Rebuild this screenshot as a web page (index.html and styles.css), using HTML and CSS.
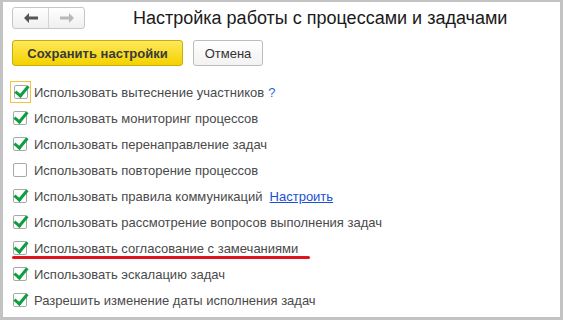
FILE: index.html
```html
<!DOCTYPE html>
<html lang="ru">
<head>
<meta charset="utf-8">
<title>Настройка работы с процессами и задачами</title>
<link rel="stylesheet" href="styles.css">
</head>
<body>
<div class="frame">
  <div class="header">
    <div class="nav">
      <span class="nav-btn back"><svg width="16" height="12" viewBox="0 0 16 12"><path d="M1 6 L6 1 L6 4.5 L15 4.5 L15 7.5 L6 7.5 L6 11 Z" fill="#555"/></svg></span>
      <span class="nav-btn fwd"><svg width="16" height="12" viewBox="0 0 16 12"><path d="M15 6 L10 1 L10 4.5 L1 4.5 L1 7.5 L10 7.5 L10 11 Z" fill="#b8b8b8"/></svg></span>
    </div>
    <h1 class="title">Настройка работы с процессами и задачами</h1>
  </div>
  <div class="actions">
    <button class="btn btn-primary">Сохранить настройки</button>
    <button class="btn btn-default">Отмена</button>
  </div>
  <ul class="options">
    <li class="opt"><span class="focus"><span class="cb checked"></span></span><span class="label">Использовать вытеснение участников</span><span class="help">?</span></li>
    <li class="opt"><span class="cb checked"></span><span class="label">Использовать мониторинг процессов</span></li>
    <li class="opt"><span class="cb checked"></span><span class="label">Использовать перенаправление задач</span></li>
    <li class="opt"><span class="cb"></span><span class="label">Использовать повторение процессов</span></li>
    <li class="opt"><span class="cb checked"></span><span class="label">Использовать правила коммуникаций</span><a class="link">Настроить</a></li>
    <li class="opt"><span class="cb checked"></span><span class="label">Использовать рассмотрение вопросов выполнения задач</span></li>
    <li class="opt"><span class="cb checked"></span><span class="label">Использовать согласование с замечаниями</span></li>
    <li class="opt"><span class="cb checked"></span><span class="label">Использовать эскалацию задач</span></li>
    <li class="opt"><span class="cb checked"></span><span class="label">Разрешить изменение даты исполнения задач</span></li>
  </ul>
  <div class="mark"></div>
</div>
</body>
</html>
```
FILE: styles.css
```css
html, body { margin: 0; padding: 0; background: #fff; }
body { font-family: "Liberation Sans", Arial, sans-serif; }
.frame {
  position: relative;
  width: 563px; height: 320px;
  box-sizing: border-box;
  border-style: solid;
  border-color: #c3c3c3;
  border-width: 2px 3px 3px 3px;
  padding: 5px 0 0 9px;
  overflow: hidden;
}
.header { display: flex; align-items: center; height: 22px; }
.nav {
  display: flex; height: 22px; box-sizing: border-box;
  border: 1px solid #c6c6c6; border-radius: 3px;
  background: linear-gradient(#ffffff, #efefef);
}
.nav-btn { width: 35px; display: flex; align-items: center; justify-content: center; }
.nav-btn.back { border-right: 1px solid #d4d4d4; }
.title {
  margin: 0 0 0 48px;
  font-size: 18px; font-weight: normal; color: #1a1a1a;
  line-height: 22px; position: relative; top: 0;
}
.actions { display: flex; gap: 10px; margin-top: 11px; }
.btn {
  height: 26px; box-sizing: border-box; border-radius: 3px;
  font-family: "Liberation Sans", Arial, sans-serif; font-size: 13px;
  padding: 0 9px; color: #333; cursor: pointer;
}
.btn-primary {
  width: 171px;
  font-weight: bold; color: #3a3a3a;
  background: linear-gradient(#fde95a, #f4d200);
  border: 1px solid #c9ac0e;
}
.btn-default {
  width: 70px;
  background: linear-gradient(#ffffff, #f2f2f2);
  border: 1px solid #bcbcbc;
}
.options { list-style: none; margin: 13px 0 0 0; padding: 0 0 0 1px; }
.opt {
  display: flex; align-items: center; height: 26px;
  font-size: 13px; color: #4a4a4a;
}
.cb {
  position: relative; flex: none;
  width: 14px; height: 14px; box-sizing: border-box;
  margin: 0 7px 0 0;
  border: 1px solid #a8a8a8; border-radius: 2px; background: #fff;
}
.cb.checked::after {
  content: ""; position: absolute;
  left: 3px; top: -3px;
  width: 5px; height: 11px;
  border-right: 3px solid #0f9d42;
  border-bottom: 3px solid #0f9d42;
  transform: rotate(40deg);
}
.focus {
  display: flex; align-items: center; justify-content: center;
  flex: none;
  width: 21px; height: 22px; box-sizing: border-box;
  border: 1px solid #f2c23a; margin: 0 3px 0 -3px;
}
.focus .cb { margin: 0; }
.label { white-space: nowrap; }
.help { color: #1f6fcf; margin-left: 4px; font-size: 13px; }
.link { color: #1a4fd6; text-decoration: underline; margin-left: 7px; }
.mark {
  position: absolute; left: 9px; top: 254px;
  width: 298px; height: 3px; border-radius: 2px;
  background: #e0141c;
}
```
